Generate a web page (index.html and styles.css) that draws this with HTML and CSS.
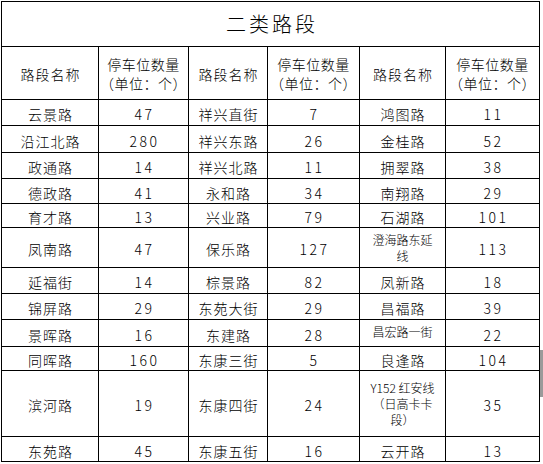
FILE: index.html
```html
<!DOCTYPE html>
<html lang="zh-CN">
<head>
<meta charset="utf-8">
<title>二类路段</title>
<link rel="stylesheet" href="styles.css">
</head>
<body>
<div class="sheet">
  <div class="cell title">二类路段</div>

  <div class="cell head name">路段名称</div>
  <div class="cell head"><span>停车位数量<br>（单位：个）</span></div>
  <div class="cell head name">路段名称</div>
  <div class="cell head"><span>停车位数量<br>（单位：个）</span></div>
  <div class="cell head name">路段名称</div>
  <div class="cell head"><span>停车位数量<br>（单位：个）</span></div>

  <div class="cell name">云景路</div><div class="cell num">47</div>
  <div class="cell name">祥兴直街</div><div class="cell num">7</div>
  <div class="cell name">鸿图路</div><div class="cell num">11</div>

  <div class="cell name">沿江北路</div><div class="cell num">280</div>
  <div class="cell name">祥兴东路</div><div class="cell num">26</div>
  <div class="cell name">金桂路</div><div class="cell num">52</div>

  <div class="cell name">政通路</div><div class="cell num">14</div>
  <div class="cell name">祥兴北路</div><div class="cell num">11</div>
  <div class="cell name">拥翠路</div><div class="cell num">38</div>

  <div class="cell name">德政路</div><div class="cell num">41</div>
  <div class="cell name">永和路</div><div class="cell num">34</div>
  <div class="cell name">南翔路</div><div class="cell num">29</div>

  <div class="cell name">育才路</div><div class="cell num">13</div>
  <div class="cell name">兴业路</div><div class="cell num">79</div>
  <div class="cell name">石湖路</div><div class="cell num">101</div>

  <div class="cell name">凤南路</div><div class="cell num">47</div>
  <div class="cell name">保乐路</div><div class="cell num">127</div>
  <div class="cell small"><span>澄海路东延<br>线</span></div><div class="cell num">113</div>

  <div class="cell name">延福街</div><div class="cell num">14</div>
  <div class="cell name">棕景路</div><div class="cell num">82</div>
  <div class="cell name">凤新路</div><div class="cell num">18</div>

  <div class="cell name">锦屏路</div><div class="cell num">29</div>
  <div class="cell name">东苑大街</div><div class="cell num">29</div>
  <div class="cell name">昌福路</div><div class="cell num">39</div>

  <div class="cell name">景晖路</div><div class="cell num">16</div>
  <div class="cell name">东建路</div><div class="cell num">28</div>
  <div class="cell small lift">昌宏路一街</div><div class="cell num">22</div>

  <div class="cell name">同晖路</div><div class="cell num">160</div>
  <div class="cell name">东康三街</div><div class="cell num">5</div>
  <div class="cell name">良逢路</div><div class="cell num">104</div>

  <div class="cell name">滨河路</div><div class="cell num">19</div>
  <div class="cell name">东康四街</div><div class="cell num">24</div>
  <div class="cell small"><span>Y152 红安线<br>（日高卡卡<br>段）</span></div><div class="cell num">35</div>

  <div class="cell name">东苑路</div><div class="cell num">45</div>
  <div class="cell name">东康五街</div><div class="cell num">16</div>
  <div class="cell name">云开路</div><div class="cell num">13</div>
</div>
<div class="scroll-thumb"></div>
</body>
</html>
```

FILE: styles.css
```css
html, body {
  margin: 0;
  padding: 0;
  background: #fff;
}

body {
  font-family: "Noto Sans CJK SC", "Noto Sans", sans-serif;
  font-weight: 300;
  color: #000;
  width: 543px;
  height: 464px;
  overflow: hidden;
  position: relative;
}

.sheet {
  display: grid;
  grid-template-columns: 96px 89px 78px 91px 85px 93px;
  grid-template-rows: 44px 52px 25px 26px 25px 24px 23px 39px 25px 25px 26px 23px 65px 24px;
  gap: 1px;
  padding: 1px;
  background: #000;
  width: max-content;
  margin: 1px 0 0 1px;
}

.cell {
  background: #fff;
  display: flex;
  align-items: center;
  justify-content: center;
  text-align: center;
  font-size: 14px;
  line-height: 18px;
  padding-top: 3px;
  box-sizing: border-box;
  white-space: nowrap;
}

.title {
  grid-column: 1 / -1;
  font-size: 20px;
  letter-spacing: 3px;
  padding: 0 0 0 3px;
}

.head {
  padding-top: 2px;
  line-height: 19px;
  letter-spacing: 0.5px;
}

.name {
  letter-spacing: 1px;
  padding-left: 1px;
}

.num {
  font-size: 14px;
  letter-spacing: 2.5px;
  padding-left: 2px;
}

.small {
  font-size: 12px;
  line-height: 16px;
  padding-top: 0;
}

.lift {
  align-items: flex-start;
  padding-top: 4px;
}

.scroll-thumb {
  position: absolute;
  right: 0;
  top: 350px;
  width: 3px;
  height: 47px;
  background: #9a9a9a;
}
```
